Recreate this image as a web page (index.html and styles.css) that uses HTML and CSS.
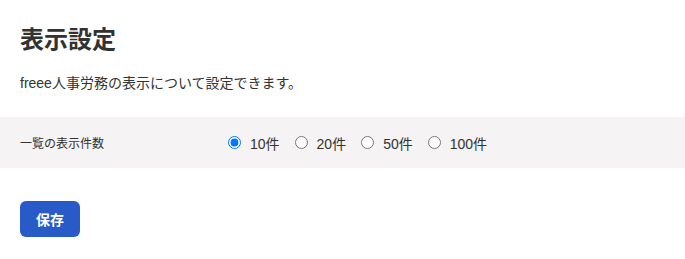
FILE: index.html
```html
<!DOCTYPE html>
<html lang="ja">
<head>
<meta charset="utf-8">
<title>表示設定</title>
<link rel="stylesheet" href="styles.css">
</head>
<body>
<main class="page">
  <h1 class="title">表示設定</h1>
  <p class="lead">freee人事労務の表示について設定できます。</p>
  <div class="setting-row">
    <div class="setting-label">一覧の表示件数</div>
    <div class="radio-group">
      <label class="radio"><input type="radio" name="per" checked><span>10件</span></label>
      <label class="radio"><input type="radio" name="per"><span>20件</span></label>
      <label class="radio"><input type="radio" name="per"><span>50件</span></label>
      <label class="radio"><input type="radio" name="per"><span>100件</span></label>
    </div>
  </div>
  <div class="actions">
    <button class="btn-primary" type="button">保存</button>
  </div>
</main>
</body>
</html>
```
FILE: styles.css
```css
* { box-sizing: border-box; }
html, body { margin: 0; padding: 0; background: #fff; }
body {
  font-family: "Liberation Sans", "Noto Sans CJK JP", sans-serif;
  color: #323232;
}
.page { padding: 0; }
.title {
  margin: 0;
  padding: 22px 20px 0;
  font-size: 24px;
  line-height: 36px;
  font-weight: 700;
}
.lead {
  margin: 0;
  padding: 13px 20px 0;
  font-size: 14px;
  line-height: 24px;
}
.setting-row {
  margin-top: 22px;
  height: 51px;
  background: #f5f3f3;
  display: flex;
  align-items: center;
  padding: 0 20px;
}
.setting-label {
  width: 208px;
  font-size: 12px;
}
.radio-group {
  display: flex;
  gap: 15px;
  font-size: 14px;
}
.radio {
  display: flex;
  align-items: center;
  gap: 9px;
}
.radio input {
  margin: 0;
  width: 13px;
  height: 13px;
}
.actions { padding: 33px 20px 0; }
.btn-primary {
  width: 60px;
  height: 36px;
  border: none;
  border-radius: 6px;
  background: #285ac8;
  color: #fff;
  font-family: inherit;
  font-size: 14px;
  font-weight: 700;
  padding: 0;
}
```
